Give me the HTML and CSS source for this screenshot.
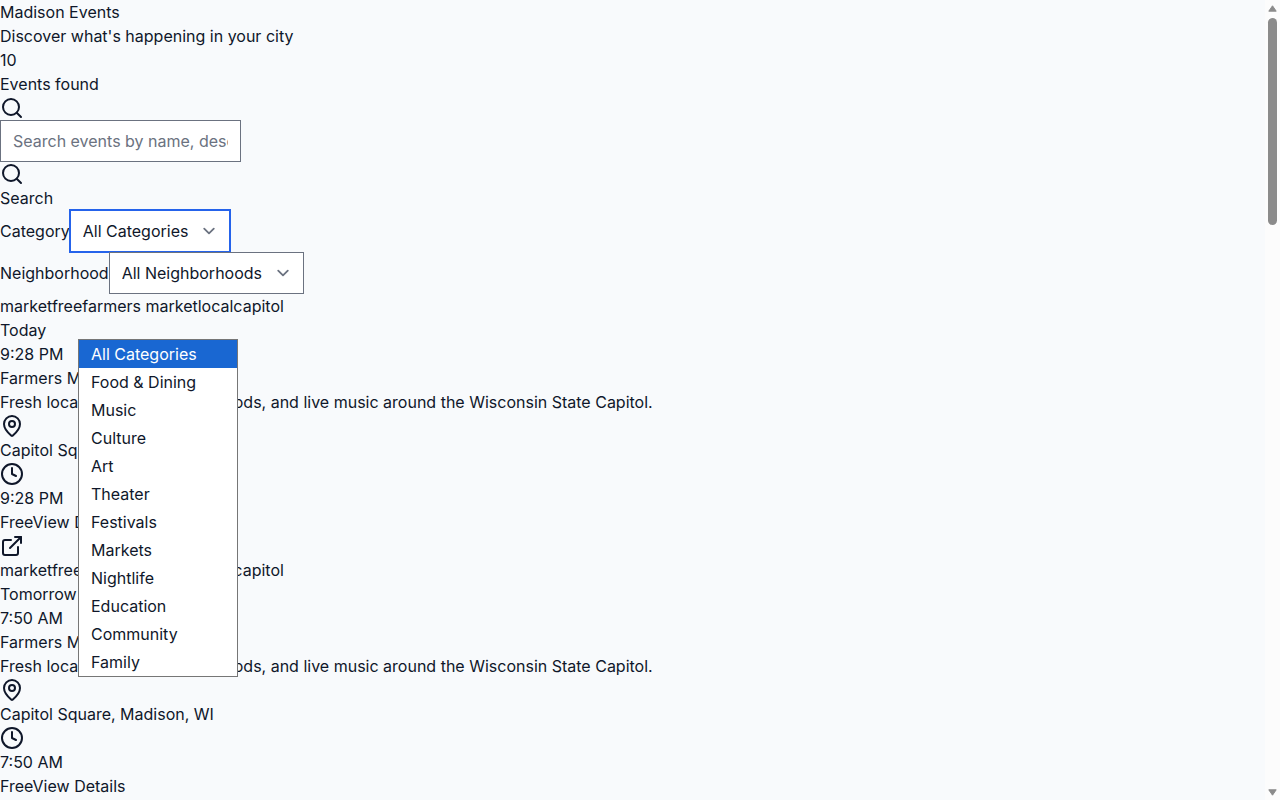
FILE: index.html
```html
<!DOCTYPE html>
<html lang="en">
<head>
<meta charset="utf-8">
<meta name="viewport" content="width=device-width, initial-scale=1">
<title>Madison Events</title>
<link rel="stylesheet" href="styles.css">
</head>
<body>
<svg class="sprite" aria-hidden="true">
  <symbol id="search" viewBox="0 0 24 24"><circle cx="11" cy="11" r="8"/><path d="m21 21-4.3-4.3"/></symbol>
  <symbol id="pin" viewBox="0 0 24 24"><path d="M20 10c0 4.993-5.539 10.193-7.399 11.799a1 1 0 0 1-1.202 0C9.539 20.193 4 14.993 4 10a8 8 0 0 1 16 0"/><circle cx="12" cy="10" r="3"/></symbol>
  <symbol id="clock" viewBox="0 0 24 24"><circle cx="12" cy="12" r="10"/><polyline points="12 6 12 12 16 14"/></symbol>
  <symbol id="external" viewBox="0 0 24 24"><path d="M18 13v6a2 2 0 0 1-2 2H5a2 2 0 0 1-2-2V8a2 2 0 0 1 2-2h6"/><polyline points="15 3 21 3 21 9"/><line x1="10" x2="21" y1="14" y2="3"/></symbol>
</svg>
<div class="page">
<header>
  <h1>Madison Events</h1>
  <p>Discover what's happening in your city</p>
  <div>10</div>
  <div>Events found</div>
</header>
<main>
  <form class="search">
    <svg class="icon" aria-hidden="true"><use href="#search"/></svg>
    <input class="field" type="text" placeholder="Search events by name, description, or location..." aria-label="Search events">
    <button class="plain" type="button"><svg class="icon" aria-hidden="true"><use href="#search"/></svg>Search</button>
    <div class="filter">
      <label for="category">Category</label><select class="field select active" id="category"><option>All Categories</option></select>
      <ul class="menu" role="listbox" aria-label="Category">
        <li class="option selected" role="option" aria-selected="true">All Categories</li>
        <li class="option" role="option">Food &amp; Dining</li>
        <li class="option" role="option">Music</li>
        <li class="option" role="option">Culture</li>
        <li class="option" role="option">Art</li>
        <li class="option" role="option">Theater</li>
        <li class="option" role="option">Festivals</li>
        <li class="option" role="option">Markets</li>
        <li class="option" role="option">Nightlife</li>
        <li class="option" role="option">Education</li>
        <li class="option" role="option">Community</li>
        <li class="option" role="option">Family</li>
      </ul>
    </div>
    <div class="filter">
      <label for="neighborhood">Neighborhood</label><select class="field select" id="neighborhood"><option>All Neighborhoods</option></select>
    </div>
  </form>
  <section class="events">
    <article>
      <div><span>market</span><span>free</span><span>farmers market</span><span>local</span><span>capitol</span></div>
      <div>Today</div>
      <div>9:28 PM</div>
      <h2>Farmers Market</h2>
      <p>Fresh local produce, artisan goods, and live music around the Wisconsin State Capitol.</p>
      <svg class="icon" aria-hidden="true"><use href="#pin"/></svg>
      <div>Capitol Square, Madison, WI</div>
      <svg class="icon" aria-hidden="true"><use href="#clock"/></svg>
      <div>9:28 PM</div>
      <div><span>Free</span><a href="#">View Details<svg class="icon" aria-hidden="true"><use href="#external"/></svg></a></div>
    </article>
    <article>
      <div><span>market</span><span>free</span><span>farmers market</span><span>local</span><span>capitol</span></div>
      <div>Tomorrow</div>
      <div>7:50 AM</div>
      <h2>Farmers Market</h2>
      <p>Fresh local produce, artisan goods, and live music around the Wisconsin State Capitol.</p>
      <svg class="icon" aria-hidden="true"><use href="#pin"/></svg>
      <div>Capitol Square, Madison, WI</div>
      <svg class="icon" aria-hidden="true"><use href="#clock"/></svg>
      <div>7:50 AM</div>
      <div><span>Free</span><a href="#">View Details</a></div>
    </article>
  </section>
</main>
</div>
<div class="scrollbar" aria-hidden="true">
  <svg class="arrow" viewBox="0 0 9 7"><path d="M4.5 0.8 8.2 6.2H0.8Z"/></svg>
  <div class="track"><div class="thumb"></div></div>
  <svg class="arrow" viewBox="0 0 9 7"><path d="M4.5 6.2 0.8 0.8H8.2Z"/></svg>
</div>
</body>
</html>
```

FILE: styles.css
```css
*, *::before, *::after {
  box-sizing: border-box;
}

body {
  display: flex;
  min-height: 100vh;
  margin: 0;
  background: #f8fafc;
  color: #0f172a;
  font: 16px/24px Inter, sans-serif;
}

h1, h2, p, ul {
  margin: 0;
  padding: 0;
  font: inherit;
}

a {
  color: inherit;
  text-decoration: none;
}

.page {
  flex: 1;
  min-width: 0;
}

.sprite {
  display: none;
}

.icon {
  display: block;
  width: 24px;
  height: 24px;
  fill: none;
  stroke: currentColor;
  stroke-width: 2;
  stroke-linecap: round;
  stroke-linejoin: round;
}

.field {
  padding: 8px 12px;
  border: 1px solid #6b7280;
  border-radius: 0;
  background-color: #fff;
  color: inherit;
  font: inherit;
}

.field::placeholder {
  color: #6b7280;
  opacity: 1;
}

input.field {
  display: block;
  width: 241px;
}

.select {
  appearance: none;
  padding-right: 40px;
  background-image: url("data:image/svg+xml,%3Csvg xmlns='http://www.w3.org/2000/svg' fill='none' viewBox='0 0 20 20'%3E%3Cpath stroke='%236b7280' stroke-linecap='round' stroke-linejoin='round' stroke-width='1.5' d='M6 8l4 4 4-4'/%3E%3C/svg%3E");
  background-position: right 8px center;
  background-repeat: no-repeat;
  background-size: 24px 24px;
}

.active,
.select:focus {
  border-color: #2563eb;
  outline: none;
  box-shadow: 0 0 0 1px #2563eb;
}

.plain {
  display: block;
  padding: 0;
  border: 0;
  background: none;
  color: inherit;
  font: inherit;
  text-align: left;
}

.filter {
  display: flex;
  position: relative;
  align-items: center;
}

.menu {
  position: absolute;
  z-index: 1;
  top: 129px;
  left: 78px;
  width: 160px;
  border: 1px solid #767676;
  background: #fff;
  list-style: none;
}

.option {
  padding: 2px 12px;
}

.selected {
  background: #1967d2;
  color: #fff;
}

.scrollbar {
  display: flex;
  position: sticky;
  top: 0;
  flex-direction: column;
  align-items: center;
  width: 15px;
  height: 100vh;
  padding: 5px 0 4px;
  background: #fcfcfc;
}

.arrow {
  width: 9px;
  height: 7px;
  fill: #8b8b8b;
  stroke: #8b8b8b;
  stroke-linejoin: round;
}

.track {
  flex: 1;
  width: 9px;
  padding: 6px 0;
}

.thumb {
  height: 27%;
  border-radius: 5px;
  background: #8b8b8b;
}
```
